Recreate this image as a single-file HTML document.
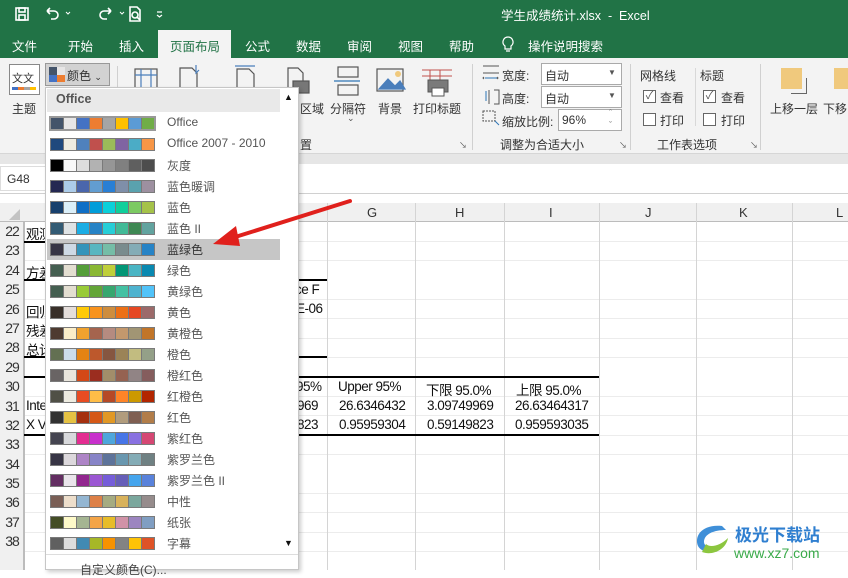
<!DOCTYPE html>
<html><head><meta charset="utf-8"><style>
*{margin:0;padding:0;box-sizing:border-box}
body{width:848px;height:570px;overflow:hidden;position:relative;background:#fff;font-family:"Liberation Sans","Noto Sans CJK SC",sans-serif;font-size:12px;color:#222}
.a{position:absolute}
.t{position:absolute;white-space:nowrap}
.tab{position:absolute;top:36px;color:#fff;font-size:12.5px}
.lbl{position:absolute;font-size:12px;color:#333;white-space:nowrap}
.cb{position:absolute;width:13px;height:13px;border:1px solid #666;background:#fff;font-size:11px;line-height:11px;text-align:center;color:#555}
.vl{position:absolute;width:1px;background:#d4d4d4}
.rh{position:absolute;left:0;width:24px;font-size:14px;color:#333;text-align:center;letter-spacing:-1px}
.ct{position:absolute;font-size:13.5px;color:#111;white-space:nowrap;letter-spacing:-0.5px}
.it{position:absolute;left:47px;width:233px;height:21px}
.sw{position:absolute;left:3px;top:4px;display:flex;border:1px solid #7a7a7a;background:#7a7a7a;gap:1px}
.sw i{display:block;width:12px;height:11px}
.it span{position:absolute;left:120px;top:2px;font-size:12px;color:#555;white-space:nowrap}
</style></head><body>
<div class="a" style="left:0;top:0;width:848px;height:58px;background:#217346"></div>
<svg class="a" style="left:14px;top:6px" width="160" height="16" viewBox="0 0 160 16" fill="none" stroke="#fff" stroke-width="1.6">
<rect x="2" y="2" width="12" height="12"/><rect x="5" y="2" width="6" height="4"/><rect x="5" y="9" width="6" height="5"/>
<path d="M33 5 h7 a4 4 0 0 1 0 8 h-3 M33 5 l3 -3 M33 5 l3 3"/><path d="M52 6 l2 2 l2-2" stroke-width="1"/>
<path d="M97 5 h-7 a4 4 0 0 0 0 8 h3 M97 5 l-3 -3 M97 5 l-3 3"/><path d="M106 6 l2 2 l2-2" stroke-width="1"/>
<path d="M116 1 h7 l3 3 v11 h-10z"/><circle cx="121" cy="9" r="3"/><path d="M123 11 l3 3"/>
<path d="M143 6 h5 M143 9 l2.5 2 l2.5 -2" stroke-width="1.2"/>
</svg>
<div class="t" style="left:501px;top:5px;color:#fff;font-size:12.5px">学生成绩统计.xlsx&nbsp; - &nbsp;Excel</div>
<div class="tab" style="left:12px">文件</div>
<div class="tab" style="left:68px">开始</div>
<div class="tab" style="left:119px">插入</div>
<div class="a" style="left:158px;top:30px;width:73px;height:30px;background:#f3f3f3"></div>
<div class="tab" style="left:170px;color:#217346">页面布局</div>
<div class="tab" style="left:245px">公式</div>
<div class="tab" style="left:296px">数据</div>
<div class="tab" style="left:347px">审阅</div>
<div class="tab" style="left:398px">视图</div>
<div class="tab" style="left:449px">帮助</div>
<svg class="a" style="left:502px;top:36px" width="12" height="18" fill="none" stroke="#fff" stroke-width="1.2"><path d="M6 1a5 5 0 0 0-3 9v3h6v-3a5 5 0 0 0-3-9zM4 15h4"/></svg>
<div class="tab" style="left:528px">操作说明搜索</div>
<div class="a" style="left:0;top:58px;width:848px;height:96px;background:#f3f3f3;border-bottom:1px solid #d6d6d6"></div>
<div class="a" style="left:0;top:154px;width:848px;height:10px;background:#e6e6e6"></div>
<div class="a" style="left:9px;top:64px;width:31px;height:31px;border:1px solid #888;background:#fff"></div>
<div class="t" style="left:12px;top:70px;font-size:11px;color:#333">文文</div>
<div class="a" style="left:12px;top:87px;width:24px;height:3px;background:linear-gradient(90deg,#4472c4 25%,#ed7d31 25% 50%,#a5a5a5 50% 75%,#ffc000 75%)"></div>
<div class="lbl" style="left:12px;top:100px">主题</div>
<div class="a" style="left:45px;top:63px;width:65px;height:23px;background:#d2d2d2;border:1px solid #999"></div>
<div class="a" style="left:49px;top:67px;width:16px;height:15px;background:linear-gradient(90deg,#44546a 50%,#e7e6e6 50%)"></div>
<div class="a" style="left:49px;top:75px;width:16px;height:7px;background:linear-gradient(90deg,#4472c4 50%,#ed7d31 50%)"></div>
<div class="lbl" style="left:67px;top:67px">颜色 <span style="font-size:9px">⌄</span></div>
<div class="a" style="left:117px;top:66px;width:1px;height:80px;background:#d0d0d0"></div>
<svg class="a" style="left:130px;top:65px" width="340" height="34" fill="none" stroke="#4a7ebb" stroke-width="1.2">
<rect x="5" y="4" width="22" height="26" stroke="#555"/><path d="M5 10h22M5 24h22M11 4v26M21 4v26"/>
<path d="M50 3h12l5 5v22h-17z" stroke="#555"/><path d="M66 0v8l3-3" />
<path d="M107 4h12l5 5v22h-17z" stroke="#555"/><path d="M105 1h20" />
<path d="M158 3h10l5 5v18h-15z" stroke="#555"/><rect x="163" y="16" width="16" height="12" fill="#777" stroke="#555"/>
<rect x="208" y="2" width="20" height="10" stroke="#555"/><rect x="208" y="20" width="20" height="10" stroke="#555"/><path d="M204 16h26" stroke="#2e74b5"/>
<rect x="247" y="4" width="26" height="22" stroke="#555"/><path d="M249 24l9-10 7 7 5-5 5 8z" fill="#4a7ebb"/><circle cx="268" cy="9" r="3" fill="#f0c97d" stroke="none"/>
</svg>
<svg class="a" style="left:420px;top:68px" width="36" height="30" fill="none" stroke="#c0504d"><path d="M2 2h30M2 8h30M10 2v12M20 2v12"/><rect x="8" y="12" width="20" height="12" fill="#7a7a7a" stroke="#555"/><rect x="12" y="20" width="12" height="8" fill="#fff" stroke="#555"/></svg>
<div class="lbl" style="left:300px;top:100px">区域</div>
<div class="lbl" style="left:330px;top:100px">分隔符</div>
<div class="lbl" style="left:378px;top:100px">背景</div>
<div class="lbl" style="left:413px;top:100px">打印标题</div>
<div class="lbl" style="left:300px;top:136px">置</div>
<div class="t" style="left:347px;top:113px;font-size:9px;color:#555">⌄</div>
<div class="t" style="left:459px;top:140px;font-size:8px;color:#555">↘</div>
<div class="a" style="left:472px;top:64px;width:1px;height:86px;background:#d0d0d0"></div>
<svg class="a" style="left:482px;top:64px" width="20" height="66" fill="none" stroke="#2e74b5" stroke-width="1"><path d="M1 2h16M1 9h16M2 13l-1 1 1 1M15 13l1 1-1 1" stroke="#555"/><path d="M3 14h12"/><path d="M7 26v14M12 26h5v14h-5" stroke="#555"/><path d="M4 27v10"/><rect x="1" y="47" width="12" height="10" stroke="#555" stroke-dasharray="2 1"/><path d="M13 57l4 4" /></svg>
<div class="lbl" style="left:502px;top:67px">宽度:</div>
<div class="lbl" style="left:502px;top:90px">高度:</div>
<div class="lbl" style="left:502px;top:113px">缩放比例:</div>
<div class="a" style="left:541px;top:63px;width:81px;height:22px;background:#fff;border:1px solid #aaa"></div>
<div class="lbl" style="left:545px;top:67px">自动</div><div class="t" style="left:608px;top:68px;font-size:8px;color:#555">▼</div>
<div class="a" style="left:541px;top:86px;width:81px;height:22px;background:#fff;border:1px solid #aaa"></div>
<div class="lbl" style="left:545px;top:90px">自动</div><div class="t" style="left:608px;top:91px;font-size:8px;color:#555">▼</div>
<div class="a" style="left:558px;top:109px;width:64px;height:22px;background:#fff;border:1px solid #aaa"></div>
<div class="lbl" style="left:562px;top:113px">96%</div><div class="t" style="left:609px;top:107px;font-size:9px;color:#777;line-height:12px">ˆ<br>ˇ</div>
<div class="lbl" style="left:500px;top:136px">调整为合适大小</div>
<div class="t" style="left:619px;top:140px;font-size:8px;color:#555">↘</div>
<div class="a" style="left:630px;top:64px;width:1px;height:86px;background:#d0d0d0"></div>
<div class="lbl" style="left:640px;top:67px">网格线</div>
<div class="lbl" style="left:700px;top:67px">标题</div>
<div class="cb" style="left:643px;top:90px">✓</div><div class="lbl" style="left:660px;top:89px">查看</div>
<div class="cb" style="left:703px;top:90px">✓</div><div class="lbl" style="left:721px;top:89px">查看</div>
<div class="cb" style="left:643px;top:113px"></div><div class="lbl" style="left:660px;top:112px">打印</div>
<div class="cb" style="left:703px;top:113px"></div><div class="lbl" style="left:721px;top:112px">打印</div>
<div class="a" style="left:695px;top:68px;width:1px;height:58px;background:#d8d8d8"></div>
<div class="lbl" style="left:657px;top:136px">工作表选项</div>
<div class="t" style="left:750px;top:140px;font-size:8px;color:#555">↘</div>
<div class="a" style="left:760px;top:64px;width:1px;height:86px;background:#d0d0d0"></div>
<div class="a" style="left:781px;top:68px;width:21px;height:21px;background:#f0c97d"></div>
<div class="a" style="left:791px;top:78px;width:16px;height:16px;border:1px solid #666;border-top:none;border-left:none"></div>
<div class="a" style="left:834px;top:68px;width:14px;height:21px;background:#f0c97d"></div>
<div class="lbl" style="left:770px;top:100px">上移一层</div>
<div class="lbl" style="left:823px;top:100px">下移</div>
<div class="a" style="left:0;top:164px;width:848px;height:30px;background:#fff;border-bottom:1px solid #d0d0d0"></div>
<div class="a" style="left:0;top:166px;width:84px;height:25px;border:1px solid #ddd"></div>
<div class="t" style="left:7px;top:172px;font-size:12px;color:#333">G48</div>
<div class="a" style="left:0;top:194px;width:848px;height:10px;background:#fff"></div>
<div class="a" style="left:0;top:203px;width:848px;height:19px;background:#f0f0f0;border-bottom:1px solid #bcbcbc"></div>
<div class="a" style="left:0;top:222px;width:24px;height:348px;background:#f0f0f0;border-right:1px solid #bcbcbc"></div>
<div class="a" style="left:9px;top:209px;width:0;height:0;border-left:11px solid transparent;border-bottom:11px solid #c3c3c3"></div>
<div class="t" style="left:367px;top:205px;font-size:13px;color:#333">G</div>
<div class="t" style="left:455px;top:205px;font-size:13px;color:#333">H</div>
<div class="t" style="left:549px;top:205px;font-size:13px;color:#333">I</div>
<div class="t" style="left:645px;top:205px;font-size:13px;color:#333">J</div>
<div class="t" style="left:739px;top:205px;font-size:13px;color:#333">K</div>
<div class="t" style="left:836px;top:205px;font-size:13px;color:#333">L</div>
<div class="a" style="left:24px;top:222px;width:824px;height:348px;background:repeating-linear-gradient(180deg,transparent 0 19px,#d8d8d8 19px 19.4px)"></div>
<div class="vl" style="left:327px;top:203px;height:367px"></div>
<div class="vl" style="left:415px;top:203px;height:367px"></div>
<div class="vl" style="left:504px;top:203px;height:367px"></div>
<div class="vl" style="left:599px;top:203px;height:367px"></div>
<div class="vl" style="left:696px;top:203px;height:367px"></div>
<div class="vl" style="left:792px;top:203px;height:367px"></div>
<div class="vl" style="left:24px;top:222px;height:348px;background:#bcbcbc"></div>
<div class="rh" style="top:223px">22</div><div class="rh" style="top:242px">23</div><div class="rh" style="top:262px">24</div>
<div class="rh" style="top:281px">25</div><div class="rh" style="top:301px">26</div><div class="rh" style="top:320px">27</div>
<div class="rh" style="top:339px">28</div><div class="rh" style="top:359px">29</div><div class="rh" style="top:378px">30</div>
<div class="rh" style="top:398px">31</div><div class="rh" style="top:417px">32</div><div class="rh" style="top:436px">33</div>
<div class="rh" style="top:456px">34</div><div class="rh" style="top:475px">35</div><div class="rh" style="top:494px">36</div>
<div class="rh" style="top:514px">37</div><div class="rh" style="top:533px">38</div>
<div class="ct" style="left:26px;top:223px">观测</div>
<div class="ct" style="left:26px;top:262px">方差</div>
<div class="ct" style="left:26px;top:301px">回归</div>
<div class="ct" style="left:26px;top:320px">残差</div>
<div class="ct" style="left:26px;top:339px">总计</div>
<div class="ct" style="left:26px;top:398px">Intercept</div>
<div class="ct" style="left:26px;top:417px">X Var</div>
<div class="a" style="left:24px;top:241px;width:30px;height:2px;background:#000"></div>
<div class="a" style="left:24px;top:279px;width:303px;height:2px;background:#000"></div>
<div class="a" style="left:24px;top:356px;width:303px;height:2px;background:#000"></div>
<div class="a" style="left:24px;top:376px;width:575px;height:2px;background:#000"></div>
<div class="a" style="left:24px;top:434px;width:575px;height:2px;background:#000"></div>
<div class="ct" style="left:288px;top:282px">nce F</div>
<div class="ct" style="left:296px;top:301px">E-06</div>
<div class="ct" style="left:296px;top:379px">95%</div>
<div class="ct" style="left:290px;top:398px">9969</div>
<div class="ct" style="left:290px;top:417px">9823</div>
<div class="ct" style="left:338px;top:379px">Upper 95%</div>
<div class="ct" style="left:426px;top:379px">下限 95.0%</div>
<div class="ct" style="left:516px;top:379px">上限 95.0%</div>
<div class="ct" style="left:339px;top:398px">26.6346432</div>
<div class="ct" style="left:427px;top:398px">3.09749969</div>
<div class="ct" style="left:515px;top:398px">26.63464317</div>
<div class="ct" style="left:339px;top:417px">0.95959304</div>
<div class="ct" style="left:427px;top:417px">0.59149823</div>
<div class="ct" style="left:515px;top:417px">0.959593035</div>
<div class="a" style="left:45px;top:87px;width:254px;height:483px;background:#fff;border:1px solid #c6c6c6;box-shadow:2px 2px 4px rgba(0,0,0,.2)"></div>
<div class="a" style="left:47px;top:89px;width:233px;height:23px;background:#e9e9e9"></div>
<div class="t" style="left:56px;top:92px;font-size:12.5px;font-weight:bold;color:#555">Office</div>
<div class="t" style="left:284px;top:92px;font-size:9px;color:#111">▲</div>
<div class="t" style="left:284px;top:538px;font-size:9px;color:#111">▼</div>
<div class="a" style="left:46px;top:554px;width:252px;height:1px;background:#ddd"></div>
<div class="t" style="left:80px;top:561px;font-size:12px;color:#444">自定义颜色(C)...</div>
<div class="it" style="top:113px"><div class="sw" style="border:2px solid #999;top:3px;left:2px"><i style="background:#44546a"></i><i style="background:#e7e6e6"></i><i style="background:#4472c4"></i><i style="background:#ed7d31"></i><i style="background:#a5a5a5"></i><i style="background:#ffc000"></i><i style="background:#5b9bd5"></i><i style="background:#70ad47"></i></div><span>Office</span></div>
<div class="it" style="top:134px"><div class="sw"><i style="background:#1f497d"></i><i style="background:#eeece1"></i><i style="background:#4f81bd"></i><i style="background:#c0504d"></i><i style="background:#9bbb59"></i><i style="background:#8064a2"></i><i style="background:#4bacc6"></i><i style="background:#f79646"></i></div><span>Office 2007 - 2010</span></div>
<div class="it" style="top:155px"><div class="sw"><i style="background:#000"></i><i style="background:#f8f8f8"></i><i style="background:#ddd"></i><i style="background:#b2b2b2"></i><i style="background:#969696"></i><i style="background:#808080"></i><i style="background:#5f5f5f"></i><i style="background:#4d4d4d"></i></div><span>灰度</span></div>
<div class="it" style="top:176px"><div class="sw"><i style="background:#242852"></i><i style="background:#acccea"></i><i style="background:#4a66ac"></i><i style="background:#629dd1"></i><i style="background:#297fd5"></i><i style="background:#7f8fa9"></i><i style="background:#5aa2ae"></i><i style="background:#9d90a0"></i></div><span>蓝色暖调</span></div>
<div class="it" style="top:197px"><div class="sw"><i style="background:#17406d"></i><i style="background:#dbeff9"></i><i style="background:#0f6fc6"></i><i style="background:#009dd9"></i><i style="background:#0bd0d9"></i><i style="background:#10cf9b"></i><i style="background:#7cca62"></i><i style="background:#a5c249"></i></div><span>蓝色</span></div>
<div class="it" style="top:218px"><div class="sw"><i style="background:#335b74"></i><i style="background:#dfe3e5"></i><i style="background:#1cade4"></i><i style="background:#2683c6"></i><i style="background:#27ced7"></i><i style="background:#42ba97"></i><i style="background:#3e8853"></i><i style="background:#62a39f"></i></div><span>蓝色 II</span></div>
<div class="it" style="top:239px;background:#c6c6c6"><div class="sw"><i style="background:#373545"></i><i style="background:#ced9e5"></i><i style="background:#3494ba"></i><i style="background:#58b6c0"></i><i style="background:#75bda7"></i><i style="background:#7a8c8e"></i><i style="background:#84acb6"></i><i style="background:#2683c6"></i></div><span style="color:#333">蓝绿色</span></div>
<div class="it" style="top:260px"><div class="sw"><i style="background:#455f51"></i><i style="background:#e3ded1"></i><i style="background:#549e39"></i><i style="background:#8ab833"></i><i style="background:#c0cf3a"></i><i style="background:#029676"></i><i style="background:#4ab5c4"></i><i style="background:#0989b1"></i></div><span>绿色</span></div>
<div class="it" style="top:281px"><div class="sw"><i style="background:#455f51"></i><i style="background:#e3ded1"></i><i style="background:#99cb38"></i><i style="background:#63a537"></i><i style="background:#37a76f"></i><i style="background:#44c1a3"></i><i style="background:#4eb3cf"></i><i style="background:#51c3f9"></i></div><span>黄绿色</span></div>
<div class="it" style="top:302px"><div class="sw"><i style="background:#39302a"></i><i style="background:#e5dedb"></i><i style="background:#ffca08"></i><i style="background:#f8931d"></i><i style="background:#ce8d3e"></i><i style="background:#ec7016"></i><i style="background:#e64823"></i><i style="background:#9c6a6a"></i></div><span>黄色</span></div>
<div class="it" style="top:323px"><div class="sw"><i style="background:#4e3b30"></i><i style="background:#fbeec9"></i><i style="background:#f0a22e"></i><i style="background:#a5644e"></i><i style="background:#b58b80"></i><i style="background:#c3986d"></i><i style="background:#a19574"></i><i style="background:#c17529"></i></div><span>黄橙色</span></div>
<div class="it" style="top:344px"><div class="sw"><i style="background:#637052"></i><i style="background:#ccddea"></i><i style="background:#e48312"></i><i style="background:#bd582c"></i><i style="background:#865640"></i><i style="background:#9b8357"></i><i style="background:#c2bc80"></i><i style="background:#94a088"></i></div><span>橙色</span></div>
<div class="it" style="top:365px"><div class="sw"><i style="background:#696464"></i><i style="background:#e9e5dc"></i><i style="background:#d34817"></i><i style="background:#9b2d1f"></i><i style="background:#a28e6a"></i><i style="background:#956251"></i><i style="background:#918485"></i><i style="background:#855d5d"></i></div><span>橙红色</span></div>
<div class="it" style="top:386px"><div class="sw"><i style="background:#505046"></i><i style="background:#eeece1"></i><i style="background:#e84c22"></i><i style="background:#ffbd47"></i><i style="background:#b64926"></i><i style="background:#ff8427"></i><i style="background:#cc9900"></i><i style="background:#b22600"></i></div><span>红橙色</span></div>
<div class="it" style="top:407px"><div class="sw"><i style="background:#323232"></i><i style="background:#e5c243"></i><i style="background:#a5300f"></i><i style="background:#d55816"></i><i style="background:#e19825"></i><i style="background:#b19c7d"></i><i style="background:#7f5f52"></i><i style="background:#b27d49"></i></div><span>红色</span></div>
<div class="it" style="top:428px"><div class="sw"><i style="background:#454551"></i><i style="background:#d8d9dc"></i><i style="background:#e32d91"></i><i style="background:#c830cc"></i><i style="background:#4ea6dc"></i><i style="background:#4775e7"></i><i style="background:#8971e1"></i><i style="background:#d54773"></i></div><span>紫红色</span></div>
<div class="it" style="top:449px"><div class="sw"><i style="background:#373545"></i><i style="background:#dcd8dc"></i><i style="background:#ad84c6"></i><i style="background:#8784c7"></i><i style="background:#5d739a"></i><i style="background:#6997af"></i><i style="background:#84acb6"></i><i style="background:#6f8183"></i></div><span>紫罗兰色</span></div>
<div class="it" style="top:470px"><div class="sw"><i style="background:#632e62"></i><i style="background:#eae5eb"></i><i style="background:#92278f"></i><i style="background:#9b57d3"></i><i style="background:#755dd9"></i><i style="background:#665eb8"></i><i style="background:#45a5ed"></i><i style="background:#5982db"></i></div><span>紫罗兰色 II</span></div>
<div class="it" style="top:491px"><div class="sw"><i style="background:#7a5f56"></i><i style="background:#eddecb"></i><i style="background:#94b6d2"></i><i style="background:#dd8047"></i><i style="background:#a5ab81"></i><i style="background:#d8b25c"></i><i style="background:#7ba79d"></i><i style="background:#968c8c"></i></div><span>中性</span></div>
<div class="it" style="top:512px"><div class="sw"><i style="background:#444d26"></i><i style="background:#fefac9"></i><i style="background:#a5b592"></i><i style="background:#f3a447"></i><i style="background:#e7bc29"></i><i style="background:#d092a7"></i><i style="background:#9c85c0"></i><i style="background:#809ec2"></i></div><span>纸张</span></div>
<div class="it" style="top:533px"><div class="sw"><i style="background:#606060"></i><i style="background:#dddddd"></i><i style="background:#418ab3"></i><i style="background:#a6b727"></i><i style="background:#f69200"></i><i style="background:#838383"></i><i style="background:#fec306"></i><i style="background:#df5327"></i></div><span>字幕</span></div>
<svg class="a" style="left:0;top:0" width="848" height="570"><path d="M350 201 L232 238" stroke="#e0201c" stroke-width="4" stroke-linecap="round"/><path d="M213 244 L236 226 L240 246 Z" fill="#e0201c"/></svg>
<svg class="a" style="left:692px;top:520px" width="42" height="40"><path d="M30 6 C10 4 2 16 6 26 C10 34 26 34 30 26 C24 30 12 28 12 22 C12 14 22 10 34 10Z" fill="#3f8fd8"/><path d="M14 24 C18 28 28 26 36 18 C34 30 20 36 10 32Z" fill="#8cc63f"/></svg>
<div class="t" style="left:735px;top:521px;font-size:17px;font-weight:bold;color:#2f7fd0">极光下载站</div>
<div class="t" style="left:734px;top:545px;font-size:14px;color:#3aaa4a">www.xz7.com</div>
</body></html>
